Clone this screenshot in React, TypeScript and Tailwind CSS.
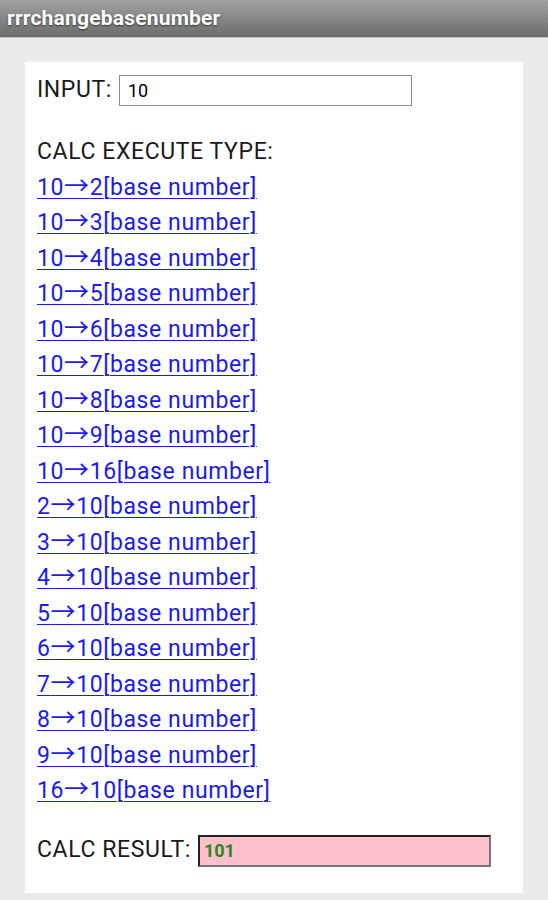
import React from "react";

const links = [
  ["10", "2"], ["10", "3"], ["10", "4"], ["10", "5"], ["10", "6"], ["10", "7"], ["10", "8"], ["10", "9"], ["10", "16"],
  ["2", "10"], ["3", "10"], ["4", "10"], ["5", "10"], ["6", "10"], ["7", "10"], ["8", "10"], ["9", "10"], ["16", "10"],
];

export default function App() {
  return (
    <div className="w-[548px] h-[900px] bg-[#ebebeb] font-['Roboto',sans-serif] overflow-hidden">
      <div className="h-[38px] bg-gradient-to-b from-[#a2a2a2] to-[#6c6c6c] border-b border-[#c4c4c4] flex items-center px-[7px]">
        <span className="text-white font-bold text-[21px] tracking-[0.2px] [text-shadow:0_1px_2px_rgba(0,0,0,0.6)]">rrrchangebasenumber</span>
      </div>
      <div className="mx-[25px] mt-[24px] h-[831px] bg-white pl-[12px] pt-[13px] text-[23px] tracking-[0.6px]">
        <div className="flex items-center text-[#1a1a1a] h-[31px]">
          <span>INPUT:</span>
          <div className="ml-[7px] w-[293px] h-[31px] border border-[#8a8a8a] flex items-center pl-[8px] text-[18px] tracking-normal text-black">10</div>
        </div>
        <div className="mt-[28px] h-[35.5px] leading-[35.5px] text-[#1a1a1a]">CALC EXECUTE TYPE:</div>
        <div className="leading-[35.5px]">
          {links.map(([a, b], i) => (
            <div key={i} className="h-[35.5px]">
              <a href="#" className="text-[#1a1aee] underline decoration-1 underline-offset-[3px]">
                {a}
                <span className="font-['Noto_Sans_CJK_JP',sans-serif] text-[25px] leading-none">→</span>
                {b}[base number]
              </a>
            </div>
          ))}
        </div>
        <div className="mt-[26px] flex items-center text-[#1a1a1a] h-[32px]">
          <span>CALC RESULT:</span>
          <div className="ml-[7px] w-[293px] h-[32px] bg-[#ffc0cb] border-2 border-t-[#222] border-l-[#222] border-r-[#777] border-b-[#777] flex items-center pl-[4px] text-[18px] tracking-normal font-bold text-[#228b22]">101</div>
        </div>
      </div>
    </div>
  );
}
